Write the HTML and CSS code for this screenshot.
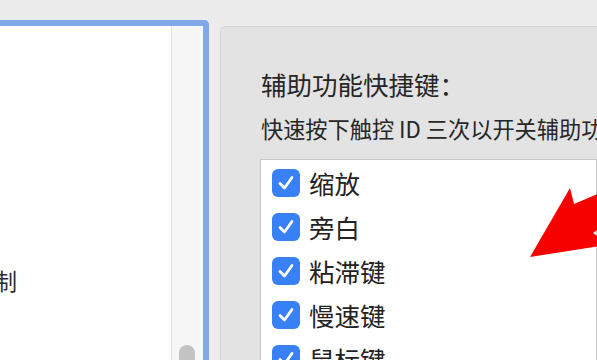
FILE: index.html
```html
<!DOCTYPE html>
<html lang="zh-CN">
<head>
<meta charset="utf-8">
<link rel="stylesheet" href="styles.css">
</head>
<body>
<div class="page">
  <div class="left">
    <div class="left-inner">
      <div class="list-area">
        <div class="item-label">控制</div>
      </div>
      <div class="scroll-track"><div class="thumb"></div></div>
    </div>
  </div>
  <div class="right">
    <div class="title">辅助功能快捷键：</div>
    <div class="subtitle">快速按下触控 ID 三次以开关辅助功能：</div>
    <div class="box">
      <div class="row"><span class="cb"><svg viewBox="0 0 28 28"><path d="M8 14.5 L12.5 19 L20 8.5"/></svg></span><span class="lbl">缩放</span></div>
      <div class="row"><span class="cb"><svg viewBox="0 0 28 28"><path d="M8 14.5 L12.5 19 L20 8.5"/></svg></span><span class="lbl">旁白</span></div>
      <div class="row"><span class="cb"><svg viewBox="0 0 28 28"><path d="M8 14.5 L12.5 19 L20 8.5"/></svg></span><span class="lbl">粘滞键</span></div>
      <div class="row"><span class="cb"><svg viewBox="0 0 28 28"><path d="M8 14.5 L12.5 19 L20 8.5"/></svg></span><span class="lbl">慢速键</span></div>
      <div class="row"><span class="cb"><svg viewBox="0 0 28 28"><path d="M8 14.5 L12.5 19 L20 8.5"/></svg></span><span class="lbl">鼠标键</span></div>
    </div>
  </div>
  <svg class="arrow" viewBox="0 0 597 360" width="597" height="360">
    <polygon points="530,257 570,188 574,204 600,193 600,228 593,233 600,238 600,246" fill="#f70000"/>
  </svg>
</div>
</body>
</html>
```

FILE: styles.css
```css
* { box-sizing: border-box; }
html, body { margin: 0; padding: 0; }
body {
  background: #ececec;
  font-family: "Noto Sans CJK SC", "Noto Sans", sans-serif;
  color: #262626;
  width: 597px;
  height: 360px;
  overflow: hidden;
}
.page {
  position: relative;
  display: flex;
  align-items: flex-start;
  gap: 11px;
  width: 597px;
  height: 360px;
  overflow: hidden;
}
.left {
  flex: 0 0 209px;
  margin-top: 20px;
  height: 360px;
  border: 6px solid #82a8ec;
  border-left: none;
  border-bottom: none;
  border-radius: 0 5px 0 0;
  background: #fff;
}
.left-inner {
  display: flex;
  height: 100%;
}
.list-area {
  flex: 0 0 172px;
  background: #fff;
  border-right: 1px solid #e2e2e2;
  padding-top: 238px;
  overflow: hidden;
}
.item-label {
  font-size: 22.5px;
  line-height: 32px;
  color: #2b2b2b;
  margin-left: -28px;
  white-space: nowrap;
}
.scroll-track {
  flex: 1;
  background: #f7f7f7;
  padding-top: 319px;
  padding-left: 7px;
}
.thumb {
  width: 16px;
  height: 60px;
  border-radius: 8px;
  background: #c3c3c3;
}
.right {
  flex: 1;
  margin-top: 26px;
  height: 340px;
  background: #e3e3e3;
  border-top: 1px solid #d4d4d4;
  border-left: 1px solid #d4d4d4;
  border-radius: 6px 0 0 0;
  padding: 39px 0 0 40px;
  white-space: nowrap;
  overflow: hidden;
}
.title {
  font-size: 25.5px;
  line-height: 35px;
  color: #262626;
}
.subtitle {
  margin-top: 13px;
  font-size: 22.2px;
  line-height: 28px;
  color: #262626;
}
.box {
  margin-top: 17px;
  margin-left: -1px;
  background: #fff;
  border: 1px solid #c6c6c6;
  height: 300px;
  padding: 1px 0 0 11px;
}
.row {
  display: flex;
  align-items: center;
  gap: 9px;
  height: 44px;
}
.cb {
  flex: 0 0 28px;
  width: 28px;
  height: 28px;
  border-radius: 6px;
  background: #3880f5;
  display: flex;
}
.cb svg {
  width: 28px;
  height: 28px;
}
.cb path {
  fill: none;
  stroke: #fff;
  stroke-width: 2.8;
  stroke-linecap: round;
  stroke-linejoin: round;
}
.lbl {
  font-size: 25.5px;
  line-height: 30px;
  color: #222;
}
.arrow {
  position: absolute;
  left: 0;
  top: 0;
  pointer-events: none;
}
```
